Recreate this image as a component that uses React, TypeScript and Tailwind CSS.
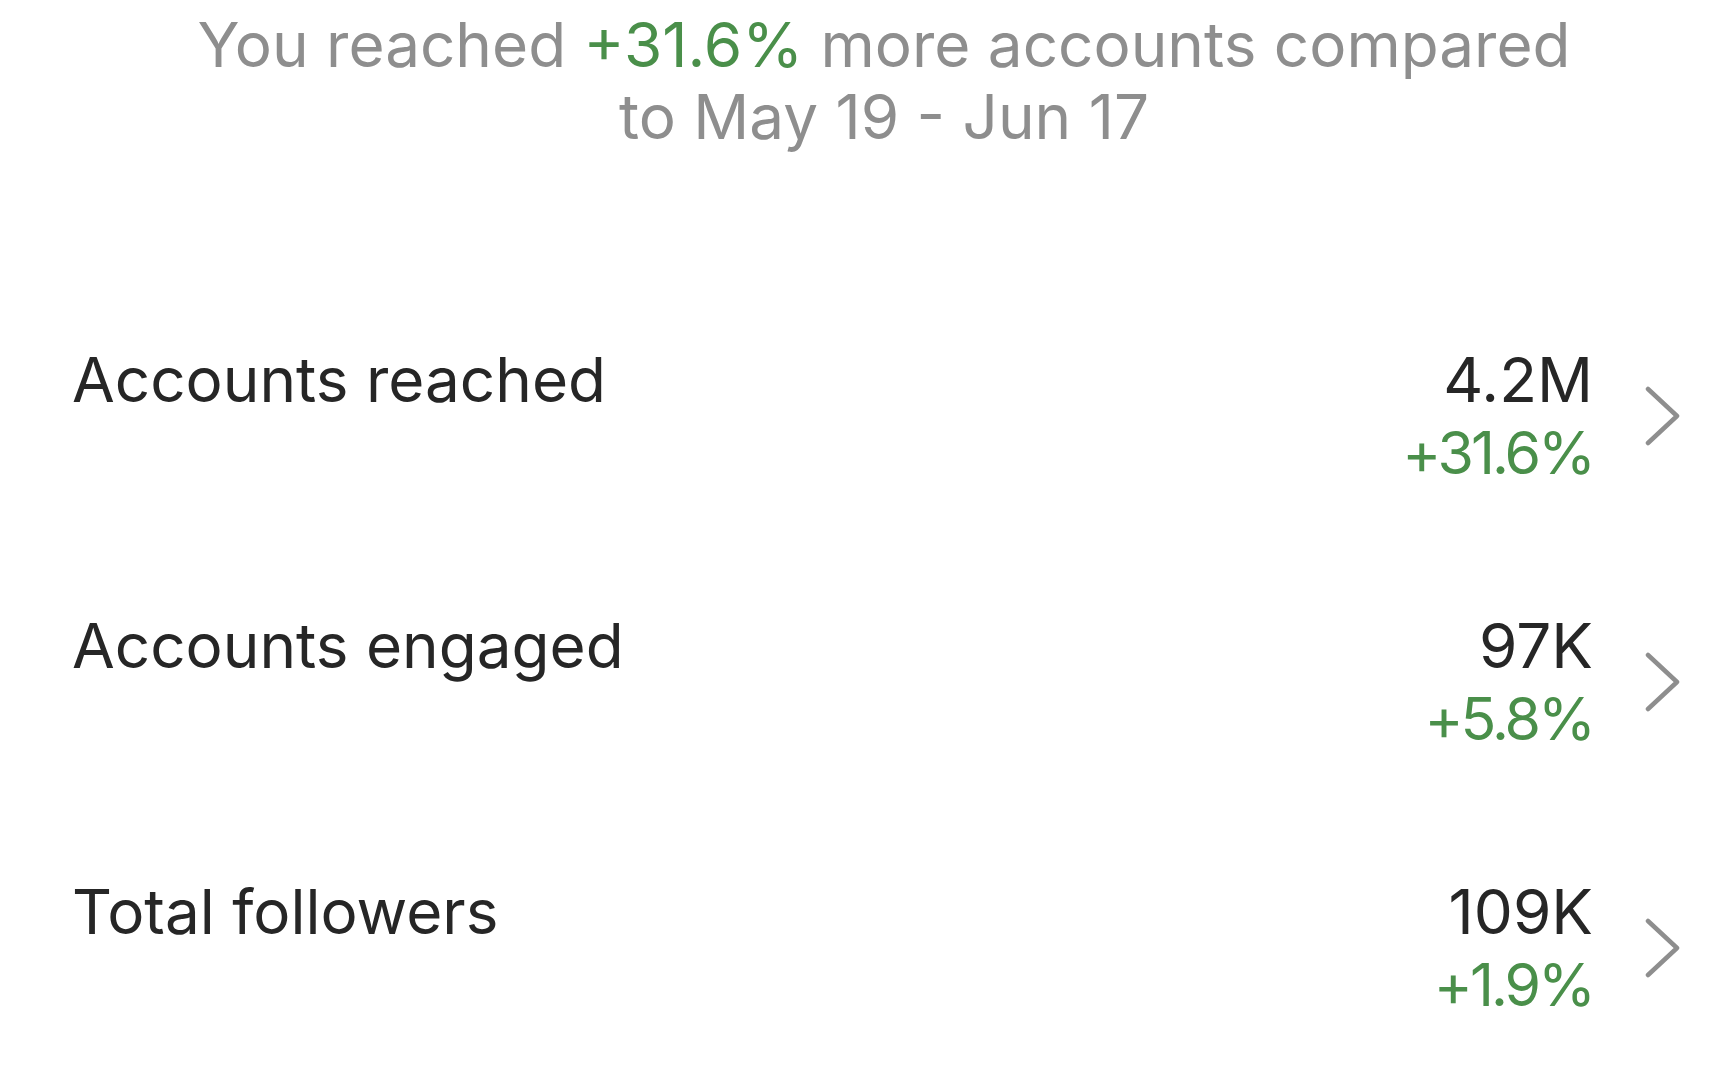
import React from "react";

interface Stat {
    label: string;
    value: string;
    change: string;
}

const stats: Stat[] = [
    { label: "Accounts reached", value: "4.2M", change: "+31.6%" },
    { label: "Accounts engaged", value: "97K", change: "+5.8%" },
    { label: "Total followers", value: "109K", change: "+1.9%" },
];

function Chevron() {
    return (
        <svg width="36" height="62" viewBox="0 0 36 62" fill="none" className="shrink-0">
            <polyline
                points="3,4 32,31 3,58"
                stroke="#8e8e8e"
                strokeWidth="4.5"
                strokeLinecap="round"
                strokeLinejoin="round"
            />
        </svg>
    );
}

function StatRow({ stat }: { stat: Stat }) {
    return (
        <div className="flex items-start justify-between">
            <div className="text-[62px] leading-[73px] text-[#262626]">{stat.label}</div>
            <div className="flex items-center gap-[52px]">
                <div className="flex flex-col items-end text-[62px] leading-[73px]">
                    <span className="text-[#262626]">{stat.value}</span>
                    <span className="text-[#4a8f4a] text-[59px] tracking-[-3px]">{stat.change}</span>
                </div>
                <Chevron />
            </div>
        </div>
    );
}

export default function App() {
    return (
        <div className="min-h-screen w-full bg-white font-['Inter',sans-serif]">
            <div className="pt-[9px] pl-[56px] text-center text-[62px] leading-[72px] text-[#8e8e8e]">
                You reached <span className="text-[#4a8f4a]">+31.6%</span> more accounts compared
                <br />
                to May 19 - Jun 17
            </div>
            <div className="mt-[190px] flex flex-col gap-[120px] pl-[72px] pr-[31px]">
                {stats.map((s) => (
                    <StatRow key={s.label} stat={s} />
                ))}
            </div>
        </div>
    );
}
